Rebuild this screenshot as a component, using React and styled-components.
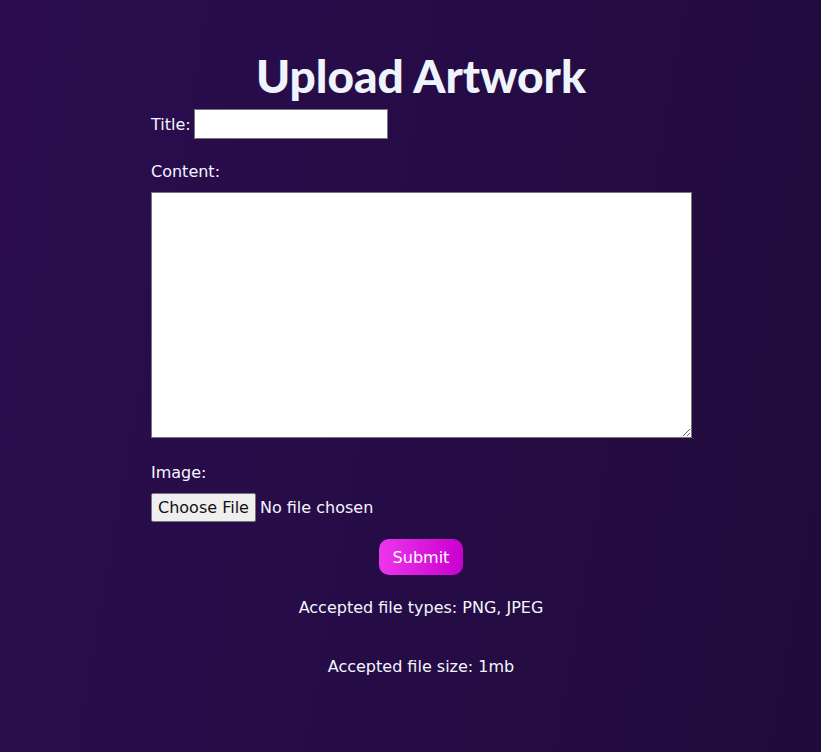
import React from 'react'
import styled, { createGlobalStyle } from 'styled-components'

const GlobalStyle = createGlobalStyle`
    * {
        box-sizing: border-box;
    }
    body {
        margin: 0;
        font-family: "DejaVu Sans", "Liberation Sans", sans-serif;
    }
`

const Page = styled.div`
    min-height: 100vh;
    padding: 48px 0 40px 21px;
    background: linear-gradient(100deg, #2b0d4f 0%, #260c46 50%, #210b3b 100%);
    color: #f4f6ff;
`

const Heading = styled.h1`
    margin: 0;
    text-align: center;
    font-family: Lato, "DejaVu Sans", sans-serif;
    font-weight: 900;
    font-size: 46px;
    line-height: 55px;
    color: #eef3fc;
`

const Form = styled.form`
    width: 540px;
    margin: 0 auto;
    display: flex;
    flex-direction: column;
`

const InlineRow = styled.div`
    display: flex;
    align-items: center;
    gap: 3px;
    margin-top: ${props => props.top || 0}px;
`

const Label = styled.label`
    display: block;
    font-size: 16px;
    line-height: 19px;
    margin-top: ${props => props.top || 0}px;
`

const TextInput = styled.input`
    width: 194px;
    height: 30px;
    padding: 1px 4px;
    border: 1px solid #767676;
    background: #fff;
    font: inherit;
`

const TextArea = styled.textarea`
    width: 541px;
    height: 246px;
    margin-top: 11px;
    border: 1px solid #767676;
    background: #fff;
    font: inherit;
`

const FileInput = styled.input`
    margin-top: 11px;
    font: inherit;
    font-size: 16px;
    color: #f4f6ff;
    &::file-selector-button {
        font: inherit;
        height: 29px;
        padding: 0 6px;
        margin-right: 4px;
        color: #111;
        background: #efefef;
        border: 1px solid #767676;
        border-radius: 2px;
    }
`

const SubmitButton = styled.button`
    align-self: center;
    margin-top: 17px;
    width: 84px;
    height: 36px;
    border: none;
    border-radius: 10px;
    background: linear-gradient(to right, #ec36ec, #c900cf);
    color: #fff;
    font: inherit;
    font-size: 16px;
`

const Note = styled.p`
    margin: ${props => props.top}px 0 0;
    text-align: center;
    font-size: 16px;
    line-height: 19px;
`

const App = () => {
    return (
        <>
            <GlobalStyle />
            <Page>
                <Heading>Upload Artwork</Heading>
                <Form onSubmit={e => e.preventDefault()}>
                    <InlineRow top={6}>
                        <Label htmlFor='title'>Title:</Label>
                        <TextInput id='title' type='text' />
                    </InlineRow>
                    <Label htmlFor='content' top={23}>Content:</Label>
                    <TextArea id='content' />
                    <Label htmlFor='image' top={25}>Image:</Label>
                    <FileInput id='image' type='file' />
                    <SubmitButton type='submit'>Submit</SubmitButton>
                    <Note top={23}>Accepted file types: PNG, JPEG</Note>
                    <Note top={40}>Accepted file size: 1mb</Note>
                </Form>
            </Page>
        </>
    )
}

export default App
